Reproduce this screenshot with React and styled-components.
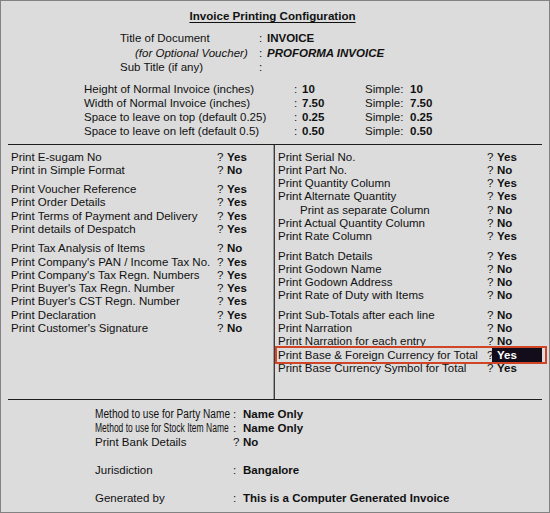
import React from 'react'
import styled, { createGlobalStyle } from 'styled-components'

const GlobalStyle = createGlobalStyle`
  html, body {
    margin: 0;
    padding: 0;
    background: #ffffff;
  }
  body {
    font-family: 'Liberation Sans', Arial, sans-serif;
  }
`

const Frame = styled.div`
  box-sizing: border-box;
  width: 550px;
  height: 513px;
  border: 1px solid #828282;
  background: #dcdcdc;
  color: #111;
  font-size: 11.5px;
  padding-top: 8px;
  display: flex;
  flex-direction: column;
`
const Heading = styled.div`
  height: 14px;
  line-height: 14px;
  text-align: center;
  padding-right: 5px;
  font-size: 11.6px;
  font-weight: bold;
  text-decoration: underline;
  text-underline-offset: 2px;
`
const TitleGrid = styled.div`
  display: grid;
  grid-template-columns: 139px 8px auto;
  grid-auto-rows: 14.5px;
  line-height: 14.5px;
  margin: 8px 0 0 119px;
`
const DimGrid = styled.div`
  display: grid;
  grid-template-columns: 210px 8px 63px 45px auto;
  grid-auto-rows: 14px;
  line-height: 14px;
  margin: 7px 0 0 83px;
`
const Label = styled.div`
  white-space: nowrap;
  padding-left: ${p => p.$indent || 0}px;
  font-style: ${p => (p.$italic ? 'italic' : 'normal')};
`
const Sep = styled.div`
  white-space: nowrap;
`
const Value = styled.div`
  white-space: nowrap;
  font-weight: bold;
  font-style: ${p => (p.$italic ? 'italic' : 'normal')};
`

const Options = styled.div`
  box-sizing: border-box;
  margin: 6px 7px 0;
  height: 256px;
  border-top: 1px solid #1e1e1e;
  border-bottom: 1px solid #1e1e1e;
  display: grid;
  grid-template-columns: 267px 1fr;
`
const Column = styled.div`
  padding-top: 6px;
  display: flex;
  flex-direction: column;
  gap: 6px;
  border-right: ${p => (p.$divider ? '1px solid #3c3c3c' : 'none')};
  box-shadow: ${p => (p.$divider ? 'inset -1px 0 0 #9c9c9c' : 'none')};
`
const Group = styled.div`
  display: flex;
  flex-direction: column;
`
const OptionRow = styled.div`
  position: relative;
  display: grid;
  grid-template-columns: ${p => p.$labelWidth}px 5px 1fr;
  padding-left: 3px;
  height: 13.3px;
  line-height: 13.3px;
  white-space: nowrap;

  &::after {
    content: '';
    display: ${p => (p.$marked ? 'block' : 'none')};
    position: absolute;
    left: 0;
    right: -5px;
    top: -3px;
    bottom: -2px;
    border: 2px solid #cf4526;
    pointer-events: none;
  }
`
const OptionLabel = styled.div`
  padding-left: ${p => (p.$sub ? 22 : 0)}px;
`
const Answer = styled.div`
  font-weight: bold;
  padding-left: 5px;
  margin-top: ${p => (p.$active ? '-1px' : 0)};
  height: ${p => (p.$active ? '14px' : 'auto')};
  line-height: ${p => (p.$active ? '15px' : 'inherit')};
  background: ${p => (p.$active ? '#130d1b' : 'transparent')};
  color: ${p => (p.$active ? '#ffffff' : 'inherit')};
`

const Footer = styled.div`
  margin: 7px 0 0 94px;
  display: flex;
  flex-direction: column;
`
const FooterRow = styled.div`
  display: grid;
  grid-template-columns: 138px 10px auto;
  height: 14.2px;
  line-height: 14.2px;
  margin-top: ${p => (p.$spaced ? '14px' : 0)};
  white-space: nowrap;
`
const FooterLabel = styled.span`
  display: inline-block;
  font-size: ${p => (p.$squeeze ? '12.5px' : 'inherit')};
  transform: scaleX(${p => p.$squeeze || 1});
  transform-origin: left center;
`

const leftGroups = [
  [
    ['Print E-sugam No', 'Yes'],
    ['Print in Simple Format', 'No'],
  ],
  [
    ['Print Voucher Reference', 'Yes'],
    ['Print Order Details', 'Yes'],
    ['Print Terms of Payment and Delivery', 'Yes'],
    ['Print details of Despatch', 'Yes'],
  ],
  [
    ['Print Tax Analysis of Items', 'No'],
    ["Print Company's PAN / Income Tax No.", 'Yes'],
    ["Print Company's Tax Regn. Numbers", 'Yes'],
    ["Print Buyer's Tax Regn. Number", 'Yes'],
    ["Print Buyer's CST Regn. Number", 'Yes'],
    ['Print Declaration', 'Yes'],
    ["Print Customer's Signature", 'No'],
  ],
]

const rightGroups = [
  [
    ['Print Serial No.', 'Yes'],
    ['Print Part No.', 'No'],
    ['Print Quantity Column', 'Yes'],
    ['Print Alternate Quantity', 'Yes'],
    ['Print as separate Column', 'No', { sub: true }],
    ['Print Actual Quantity Column', 'No'],
    ['Print Rate Column', 'Yes'],
  ],
  [
    ['Print Batch Details', 'Yes'],
    ['Print Godown Name', 'No'],
    ['Print Godown Address', 'No'],
    ['Print Rate of Duty with Items', 'No'],
  ],
  [
    ['Print Sub-Totals after each line', 'No'],
    ['Print Narration', 'No'],
    ['Print Narration for each entry', 'No'],
    ['Print Base & Foreign Currency for Total', 'Yes', { marked: true }],
    ['Print Base Currency Symbol for Total', 'Yes'],
  ],
]

const dims = [
  ['Height of Normal Invoice (inches)', '10', '10'],
  ['Width of Normal Invoice (inches)', '7.50', '7.50'],
  ['Space to leave on top (default 0.25)', '0.25', '0.25'],
  ['Space to leave on left (default 0.5)', '0.50', '0.50'],
]

function OptionColumn({ groups, labelWidth, divider }) {
  return (
    <Column $divider={divider}>
      {groups.map((rows, i) => (
        <Group key={i}>
          {rows.map(([label, answer, opts = {}]) => (
            <OptionRow key={label} $labelWidth={labelWidth} $marked={opts.marked}>
              <OptionLabel $sub={opts.sub}>{label}</OptionLabel>
              <Sep>?</Sep>
              <Answer $active={opts.marked}>{answer}</Answer>
            </OptionRow>
          ))}
        </Group>
      ))}
    </Column>
  )
}

export default function App() {
  return (
    <>
      <GlobalStyle />
      <Frame>
        <Heading>Invoice Printing Configuration</Heading>

        <TitleGrid>
          <Label>Title of Document</Label>
          <Sep>:</Sep>
          <Value>INVOICE</Value>
          <Label $indent={15} $italic>(for Optional Voucher)</Label>
          <Sep>:</Sep>
          <Value $italic>PROFORMA INVOICE</Value>
          <Label>Sub Title (if any)</Label>
          <Sep>:</Sep>
          <Value />
        </TitleGrid>

        <DimGrid>
          {dims.map(([label, normal, simple]) => (
            <React.Fragment key={label}>
              <Label>{label}</Label>
              <Sep>:</Sep>
              <Value>{normal}</Value>
              <Label>Simple:</Label>
              <Value>{simple}</Value>
            </React.Fragment>
          ))}
        </DimGrid>

        <Options>
          <OptionColumn groups={leftGroups} labelWidth={206} divider />
          <OptionColumn groups={rightGroups} labelWidth={209} />
        </Options>

        <Footer>
          <FooterRow>
            <FooterLabel $squeeze={0.81}>Method to use for Party Name</FooterLabel>
            <Sep>:</Sep>
            <Value>Name Only</Value>
          </FooterRow>
          <FooterRow>
            <FooterLabel $squeeze={0.68}>Method to use for Stock Item Name</FooterLabel>
            <Sep>:</Sep>
            <Value>Name Only</Value>
          </FooterRow>
          <FooterRow>
            <FooterLabel>Print Bank Details</FooterLabel>
            <Sep>?</Sep>
            <Value>No</Value>
          </FooterRow>
          <FooterRow $spaced>
            <FooterLabel>Jurisdiction</FooterLabel>
            <Sep>:</Sep>
            <Value>Bangalore</Value>
          </FooterRow>
          <FooterRow $spaced>
            <FooterLabel>Generated by</FooterLabel>
            <Sep>:</Sep>
            <Value>This is a Computer Generated Invoice</Value>
          </FooterRow>
        </Footer>
      </Frame>
    </>
  )
}
